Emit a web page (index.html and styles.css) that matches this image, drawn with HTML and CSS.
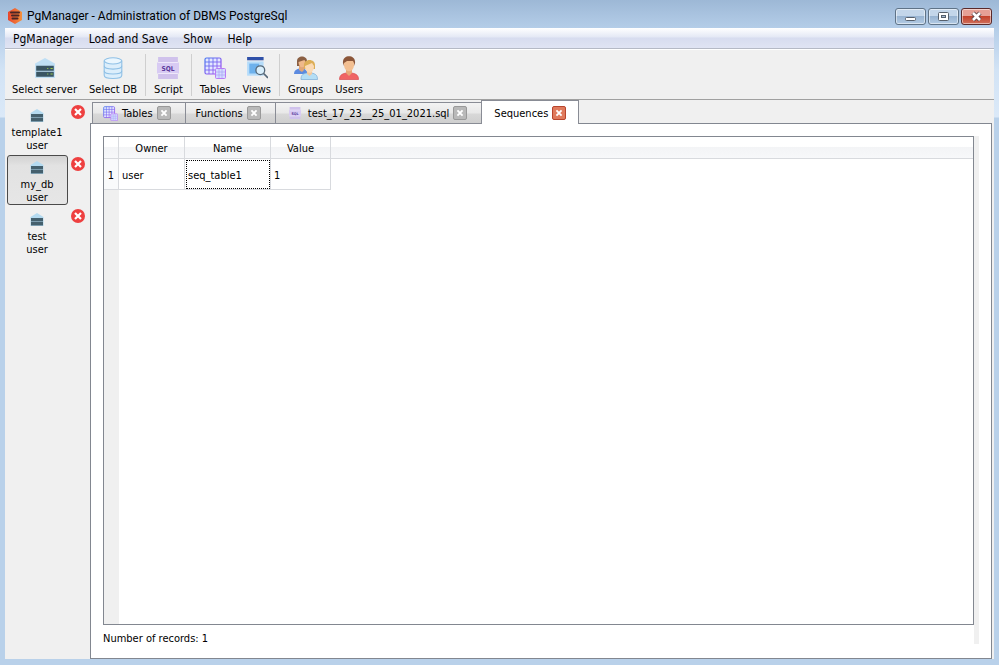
FILE: index.html
```html
<!DOCTYPE html>
<html lang="en">
<head>
<meta charset="utf-8">
<title>PgManager</title>
<link rel="stylesheet" href="styles.css">
</head>
<body>
<svg width="0" height="0" class="defs" aria-hidden="true">
  <defs>
    <linearGradient id="gridInk" gradientUnits="userSpaceOnUse" x1="1" y1="1" x2="18" y2="18"><stop offset="0" stop-color="#4a78f0"/><stop offset="1" stop-color="#b44cf0"/></linearGradient>
    <linearGradient id="logoInk" x1="0" y1="0" x2="1" y2="0"><stop offset="0" stop-color="#e8452c"/><stop offset="1" stop-color="#f5923c"/></linearGradient>
    <symbol id="server" viewBox="0 0 20 20">
      <path d="M10 1L19 6v13H1V6z" fill="#bfdff5"/>
      <path d="M2 8h16v4.500H2zM2 13.500h16V18H2z" fill="#3a5563"/>
      <path d="M12 10h1v1h-1zM15 10h2v1h-2zM12 15h1v1h-1zM15 15h2v1h-2z" fill="#9ccc4a"/>
    </symbol>
    <symbol id="minipc" viewBox="0 0 14 14">
      <path d="M7 0l6.500 4v9H.5V4z" fill="#b4daf0"/>
      <path d="M1 5h12v3.500H1zM1 9h12v3.500H1z" fill="#44606e"/>
    </symbol>
    <symbol id="table" viewBox="0 0 22 22">
      <rect x="1" y="1" width="16" height="16" rx="1.500" fill="#e4e8ff" stroke="url(#gridInk)" stroke-width="1.200"/>
      <path d="M5 1v16M9 1v16M13 1v16M1 5h16M1 9h16M1 13h16" stroke="url(#gridInk)" stroke-width=".9" fill="none"/>
      <rect x="11.500" y="11.500" width="10" height="10" rx="1" fill="#d4dcff" stroke="#b77bf5"/>
      <path d="M15 12v9M18 12v9M12 15h9M12 18h9" stroke="#a9a4f5" stroke-width=".7"/>
    </symbol>
    <symbol id="script" viewBox="0 0 20 20">
      <path d="M1 0h18v20H1z" fill="#d0c2ec"/>
      <path d="M0 5h20v10H0z" fill="#d8cbf3"/>
      <path d="M1 5h18M1 15h18" stroke="#eee8fa"/>
      <text x="10" y="12.500" text-anchor="middle" class="sql">SQL</text>
    </symbol>
    <symbol id="cross" viewBox="0 0 14 14">
      <path d="M4 4l6 6M10 4l-6 6" stroke-width="2.200" fill="none"/>
    </symbol>
  </defs>
</svg>
<header class="titlebar">
  <svg class="logo" viewBox="0 0 14 16"><path d="M7 0l7 4v8l-7 4-7-4V4z" fill="url(#logoInk)"/><path d="M3 4.500h8M4 7.500h6.500M4.500 10.500h5" stroke="#4a2525" stroke-width="2" stroke-linecap="round"/></svg>
  <h1>PgManager - Administration of DBMS PostgreSql</h1>
  <div class="winbuttons">
    <button aria-label="Minimize"><svg viewBox="0 0 29 15"><rect x="9.500" y="8.500" width="10" height="3" rx="1" fill="#fff" stroke="#56606c"/></svg></button>
    <button aria-label="Maximize"><svg viewBox="0 0 29 15"><rect x="9.500" y="3.500" width="10" height="8" rx="1" fill="#fff" stroke="#56606c"/><rect x="12.500" y="6.500" width="4" height="2" fill="#a7bdd6" stroke="#56606c"/></svg></button>
    <button class="close" aria-label="Close"><svg viewBox="0 0 29 15"><path d="M11 4l7 7M18 4l-7 7" stroke="#61464a" stroke-width="4.500"/><path d="M11 4l7 7M18 4l-7 7" stroke="#fff" stroke-width="2.600"/></svg></button>
  </div>
</header>
<div class="client">
  <nav class="menu"><button>PgManager</button><button>Load and Save</button><button>Show</button><button>Help</button></nav>
  <div class="toolbar">
    <button><svg viewBox="0 0 20 20"><use href="#server"/></svg>Select server</button>
    <button><svg viewBox="0 0 20 20"><path d="M2 3.500v13c0 4 16 4 16 0v-13" fill="#dceefb" stroke="#8fc0e6"/><ellipse cx="10" cy="3.500" rx="8" ry="2.800" fill="#eaf6fe" stroke="#8fc0e6"/><path d="M2 8c0 4 16 4 16 0M2 12.500c0 4 16 4 16 0" fill="none" stroke="#8fc0e6"/></svg>Select DB</button>
    <hr>
    <button><svg viewBox="0 0 20 20"><use href="#script"/></svg>Script</button>
    <hr>
    <button><svg viewBox="0 0 22 22"><use href="#table"/></svg>Tables</button>
    <button><svg viewBox="0 0 20 20"><path d="M1 0h15v3H1z" fill="#2f50a8"/><path d="M1 4h15v13H1z" fill="#b5dcfa"/><path d="M3 6h9v9H3z" fill="#6db1ec"/><circle cx="13" cy="12" r="4" fill="#d9effc" stroke="#566878" stroke-width="1.200"/><path d="M16 15l4 4" stroke="#566878" stroke-width="1.600"/></svg>Views</button>
    <hr>
    <button><svg class="wide" viewBox="0 0 24 24"><path d="M0 18c0-4 3-5 7-6 4 1 7 2 7 6z" fill="#5c8be0"/><path d="M5 9h5v5l-2 2-3-2z" fill="#e0a577"/><path d="M3 5c0-6 10-6 10 0v5H3z" fill="#8a5f43"/><path d="M4.500 6l6-2 1 2c0 7-7 7-7 0z" fill="#efb98b"/><path d="M7 23.500c0-5 2-6 8-7 6 1 8.500 2 8.500 7z" fill="#b5def5" stroke="#78aad6" stroke-width=".7"/><path d="M13 14h5v4l-2.500 2-2.500-2z" fill="#f2c89e"/><path d="M10 10c-1-8 12-8 11 0v3H10z" fill="#dcae56"/><path d="M11 10l7-3 2 3c0 9-9 9-9 0z" fill="#fbdab5"/></svg>Groups</button>
    <button><svg class="wide" viewBox="0 0 24 24"><path d="M2.500 23.500c0-5 3-6 9.500-7 6.500 1 9.500 2 9.500 7z" fill="#f06464" stroke="#d94c50" stroke-width=".7"/><path d="M9 13h6v4l-3 3-3-3z" fill="#e8a878"/><path d="M6 7c-1-9 13-9 12 0l-1 3H7z" fill="#8b5639"/><path d="M7 7l3-2h6l1 2c1 11-11 11-10 0z" fill="#f3bf91"/></svg>Users</button>
  </div>
  <div class="work">
    <aside class="connections">
      <div class="conn"><button class="pick"><svg viewBox="0 0 14 14"><use href="#minipc"/></svg>template1<br>user</button><button class="drop" aria-label="Disconnect template1"><svg viewBox="0 0 14 14"><use href="#cross"/></svg></button></div>
      <div class="conn"><button class="pick active"><svg viewBox="0 0 14 14"><use href="#minipc"/></svg>my_db<br>user</button><button class="drop" aria-label="Disconnect my_db"><svg viewBox="0 0 14 14"><use href="#cross"/></svg></button></div>
      <div class="conn"><button class="pick"><svg viewBox="0 0 14 14"><use href="#minipc"/></svg>test<br>user</button><button class="drop" aria-label="Disconnect test"><svg viewBox="0 0 14 14"><use href="#cross"/></svg></button></div>
    </aside>
    <main class="main">
      <div class="tabs">
        <div class="tab"><svg class="ticon" viewBox="0 0 22 22"><use href="#table"/></svg><a href="#tables">Tables</a><button aria-label="Close Tables"><svg viewBox="0 0 14 14"><use href="#cross"/></svg></button></div>
        <div class="tab"><a href="#functions">Functions</a><button aria-label="Close Functions"><svg viewBox="0 0 14 14"><use href="#cross"/></svg></button></div>
        <div class="tab"><svg class="ticon small" viewBox="0 0 20 20"><use href="#script"/></svg><a href="#sql">test_17_23__25_01_2021.sql</a><button aria-label="Close SQL file"><svg viewBox="0 0 14 14"><use href="#cross"/></svg></button></div>
        <div class="tab current"><a href="#sequences">Sequences</a><button aria-label="Close Sequences"><svg viewBox="0 0 14 14"><use href="#cross"/></svg></button></div>
      </div>
      <section class="pane">
        <div class="page">
          <div class="gridbox">
            <table>
              <colgroup><col class="c-num"><col class="c-owner"><col class="c-name"><col class="c-value"><col></colgroup>
              <thead><tr><th></th><th>Owner</th><th>Name</th><th>Value</th><th></th></tr></thead>
              <tbody><tr><th>1</th><td>user</td><td class="focus">seq_table1</td><td>1</td><td class="rest"></td></tr></tbody>
            </table>
            <div class="gutter"></div>
          </div>
          <p>Number of records: 1</p>
        </div>
        <div class="edge"></div>
      </section>
    </main>
  </div>
</div>
</body>
</html>
```
FILE: styles.css
```css
* { box-sizing: border-box; }
body {
  margin: 0;
  height: 100vh;
  display: flex;
  flex-direction: column;
  padding: 0 5px 6px;
  background: linear-gradient(#9db8d6 0, #b4cde8 28px, #d2e3f5 70px, #dbe9f8 117px, #b9d1ea 118px);
  font: 11px/13px "DejaVu Sans Condensed", "DejaVu Sans", sans-serif;
  color: #000;
}
button { font: inherit; color: inherit; border: 0; background: none; padding: 0; }
svg { display: block; }
.defs { position: absolute; }
.sql { font: bold 6px "DejaVu Sans Condensed", sans-serif; fill: #5b3a9c; }

.titlebar { height: 28px; flex: none; display: flex; align-items: center; padding: 4px 2px 0; }
.logo { width: 14px; height: 16px; margin: 0 5px 0 1px; }
h1 { margin: 0; flex: 1; font: 12px/16px Roboto, sans-serif; }
.winbuttons { display: flex; gap: 2px; }
.winbuttons button {
  width: 31px; height: 17px;
  border: 1px solid #5f7387; border-radius: 3px;
  background: linear-gradient(#c3d6ea 0 45%, #98b4d2 50%, #b3cbe4);
  box-shadow: inset 0 0 0 1px rgba(255, 255, 255, .5);
}
.winbuttons .close { border-color: #5a2a2a; background: linear-gradient(#e6a095 0 45%, #c4432c 50%, #d0705c); }

.client { flex: 1; min-height: 0; display: flex; flex-direction: column; background: #f0f0f0; }
.menu {
  height: 21px; flex: none; display: flex; gap: 15px; padding: 1px 8px 0;
  background: linear-gradient(#fff, #e4e8f5 45%, #d7dcef 50%, #e0e4f3);
  border-bottom: 1px solid #b5b9c5;
  font: 12px/20px "DejaVu Sans Condensed", sans-serif;
}
.toolbar { height: 50px; flex: none; display: flex; padding: 0 2px; border-top: 1px solid #fff; }
.toolbar button { padding: 6px 5px 0; display: flex; flex-direction: column; align-items: center; gap: 3px; }
.toolbar button + button { margin-left: 2px; }
.toolbar svg { width: 22px; height: 22px; margin: 1px; }
.toolbar .wide { width: 24px; height: 24px; margin: 0; }
.toolbar hr { width: 1px; height: 42px; margin: 4px 3px; border: 0; background: #cfcfcf; }

.work { flex: 1; min-height: 0; display: flex; border-top: 1px solid #a0a0a0; }
.connections { width: 85px; padding: 3px 1px 0 2px; }
.conn { display: flex; gap: 3px; align-items: flex-start; margin-bottom: 2px; }
.pick {
  width: 61px; height: 50px; padding: 3px 1px 0 0;
  border: 1px solid transparent; border-radius: 3px;
}
.pick svg { width: 14px; height: 14px; margin: 1px auto 3px; }
.pick.active { border-color: #4a4a4a; background: linear-gradient(#d2d2d2, #e2e2e2 20%, #e6e6e6); }
.drop { width: 14px; height: 14px; margin-top: 2px; border-radius: 50%; background: #ee4040; stroke: #fff; }

.main { flex: 1; min-width: 0; display: flex; flex-direction: column; }
.tabs { height: 24px; flex: none; display: flex; align-items: flex-end; margin-bottom: -1px; padding-left: 2px; z-index: 1; }
.tab {
  height: 22px; display: flex; align-items: center; gap: 4px; padding: 0 14px 0 10px;
  border: 1px solid #898c95; border-left-width: 0;
  background: linear-gradient(#f3f3f3, #e8e8e8 50%, #d8d8d8 55%, #cfcfcf);
}
.tab:first-child { border-left-width: 1px; }
.tab a { color: inherit; text-decoration: none; padding-top: 1px; }
.tab button { width: 14px; height: 14px; border-radius: 2px; background: #b9b9b9; border: 1px solid #999; stroke: #fff; }
.tab.current { height: 24px; padding: 0 12px; margin-left: -1px; border-left-width: 1px; border-bottom: 0; background: #fff; }
.tab.current button { background: #e07a5c; border-color: #b8442c; }
.ticon { width: 15px; height: 15px; }
.ticon.small { width: 12px; height: 12px; margin: 0 3px; }

.pane { flex: 1; min-height: 0; display: flex; margin-right: 2px; border: 1px solid #828790; background: #fff; }
.page { flex: 1; display: flex; flex-direction: column; padding: 12px 0 13px 12px; }
.edge { width: 5px; margin: 12px 12px 14px 0; background: #f0f0f0; }
.gridbox { flex: 1; min-height: 0; border: 1px solid #828790; display: flex; flex-direction: column; }
.page p { margin: 0; padding-top: 7px; }
table { width: 100%; table-layout: fixed; border-collapse: separate; border-spacing: 0; }
.c-num { width: 15px; }
.c-owner { width: 66px; }
.c-name { width: 86px; }
.c-value { width: 60px; }
th, td { padding: 0; font-weight: normal; border: 0 solid #d8dade; border-width: 0 1px 1px 0; }
thead th { height: 22px; padding-top: 2px; background: linear-gradient(#fff 45%, #f3f4f6 50%, #f7f8fa); }
thead th:last-child { border-right: 0; }
tbody th { background: #f9fafb; }
tbody th, td { height: 31px; padding-top: 2px; }
td { padding-left: 3px; }
td.rest { border: 0; }
td.focus { outline: 1px dotted #000; outline-offset: -2px; }
.gutter { flex: 1; width: 15px; background: #f0f0f0; }
```
